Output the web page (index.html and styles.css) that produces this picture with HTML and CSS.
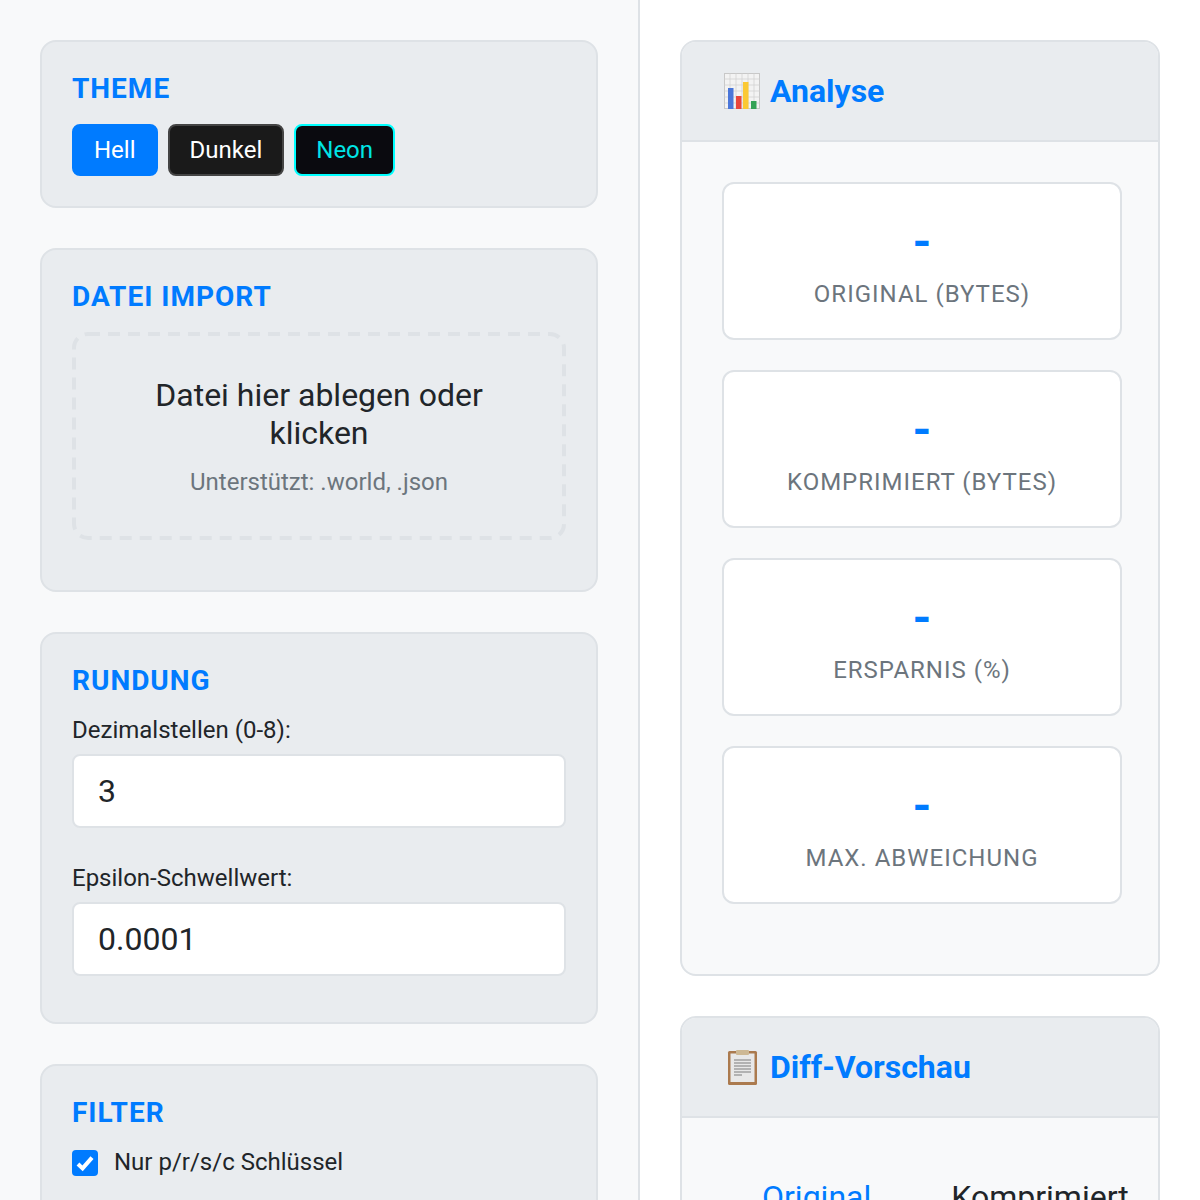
FILE: index.html
```html
<!DOCTYPE html>
<html lang="de">
<head>
  <meta charset="UTF-8">
  <title>Welt Komprimierung</title>
  <link rel="stylesheet" href="styles.css">
</head>
<body>
  <div class="app">
    <aside class="sidebar">
      <section class="panel">
        <h3>Theme</h3>
        <div class="themes">
          <button class="theme-btn light">Hell</button>
          <button class="theme-btn dark">Dunkel</button>
          <button class="theme-btn neon">Neon</button>
        </div>
      </section>

      <section class="panel">
        <h3>Datei Import</h3>
        <div class="dropzone">
          <svg class="dash" aria-hidden="true"><rect class="dash-line"></rect></svg>
          <p class="drop-title">Datei hier ablegen oder klicken</p>
          <p class="drop-hint">Unterstützt: .world, .json</p>
        </div>
      </section>

      <section class="panel">
        <h3>Rundung</h3>
        <div class="field">
          <label for="decimals">Dezimalstellen (0-8):</label>
          <input id="decimals" type="text" value="3">
        </div>
        <div class="field">
          <label for="epsilon">Epsilon-Schwellwert:</label>
          <input id="epsilon" type="text" value="0.0001">
        </div>
      </section>

      <section class="panel">
        <h3>Filter</h3>
        <label class="check">
          <span class="box">
            <svg viewBox="0 0 26 26" width="26" height="26"><path d="M6 14l4.6 4.4L20 7.6" fill="none" stroke="#fff" stroke-width="4"/></svg>
          </span>
          Nur p/r/s/c Schlüssel
        </label>
        <label class="check">
          <span class="box off"></span>
          Leere (Objekte/Arrays)
        </label>
      </section>
    </aside>

    <main class="content">
      <section class="card">
        <header class="card-head">
          <svg class="emoji" viewBox="0 0 36 36" width="36" height="36">
            <rect x="0.5" y="0.5" width="35" height="35" fill="#f3f3f3" stroke="#c8c8c8"/>
            <path d="M0 6h36M0 12h36M0 18h36M0 24h36M0 30h36M6 0v36M12 0v36M18 0v36M24 0v36M30 0v36" stroke="#cfcfcf" stroke-width="0.7"/>
            <rect x="4" y="15" width="5.5" height="21" fill="#4a76d9"/>
            <rect x="12" y="23" width="5.5" height="13" fill="#e8453c"/>
            <rect x="19" y="9" width="5.5" height="27" fill="#fbc934"/>
            <rect x="27" y="28" width="5.5" height="8" fill="#34a256"/>
          </svg>
          <h2>Analyse</h2>
        </header>
        <div class="card-body">
          <div class="stat"><div class="stat-value">-</div><div class="stat-label">Original (Bytes)</div></div>
          <div class="stat"><div class="stat-value">-</div><div class="stat-label">Komprimiert (Bytes)</div></div>
          <div class="stat"><div class="stat-value">-</div><div class="stat-label">Ersparnis (%)</div></div>
          <div class="stat"><div class="stat-value">-</div><div class="stat-label">Max. Abweichung</div></div>
        </div>
      </section>

      <section class="card">
        <header class="card-head">
          <svg class="emoji" viewBox="0 0 36 36" width="36" height="36">
            <rect x="4" y="2" width="29" height="34" rx="1.5" fill="#ab7a4e"/>
            <rect x="6.5" y="4.5" width="24" height="28.5" fill="#e8e8e8"/>
            <rect x="12" y="1" width="13" height="5" rx="1" fill="#cdb894"/>
            <path d="M10 11h17M10 14h17M10 17h17M10 20h17M10 23h17M10 26h8" stroke="#7d7d7d" stroke-width="1.2"/>
          </svg>
          <h2>Diff-Vorschau</h2>
        </header>
        <div class="card-body tabs-body">
          <div class="tabs">
            <span class="tab active">Original</span>
            <span class="tab">Komprimiert</span>
          </div>
        </div>
      </section>
    </main>
  </div>
</body>
</html>
```

FILE: styles.css
```css
* { box-sizing: border-box; }
html, body { margin: 0; height: 1200px; overflow: hidden; }
body { background: #fff; color: #212529; font-family: Roboto, "Liberation Sans", sans-serif; }

.app { display: flex; align-items: flex-start; height: 1200px; overflow: hidden; }

.sidebar { width: 640px; height: 1200px; flex: none; padding: 40px; background: #f8f9fa; border-right: 2px solid #dee2e6; overflow: hidden; }
.panel { background: #e9ecef; border: 2px solid #dee2e6; border-radius: 16px; padding: 30px; margin-bottom: 40px; }
.panel h3 { margin: 0 0 19px; color: #007bff; font-size: 28px; line-height: 33px; font-weight: 700; text-transform: uppercase; letter-spacing: 1px; }

.themes { display: flex; gap: 10px; }
.theme-btn { height: 52px; padding: 0 20px; border: 2px solid transparent; border-radius: 8px; font: 400 24px Roboto, sans-serif; }
.theme-btn.light { background: #007bff; border-color: #007bff; color: #fff; }
.theme-btn.dark { background: #1a1a1a; border-color: #444; color: #fff; }
.theme-btn.neon { background: #0a0a0f; border-color: #00ffff; color: #00e5e5; }

.dropzone { position: relative; padding: 44px; margin-bottom: 20px; text-align: center; }
.dash { position: absolute; top: 0; left: 0; width: 100%; height: 100%; }
.dash-line { x: 2px; y: 2px; width: calc(100% - 4px); height: calc(100% - 4px); rx: 14px; fill: none; stroke: #dee2e6; stroke-width: 4; stroke-dasharray: 12 8; }
.drop-title { margin: 0 0 16px; font-size: 32px; line-height: 38px; }
.drop-hint { margin: 0; font-size: 24px; line-height: 28px; color: #6c757d; }

.field { display: flow-root; }
.field + .field { margin-top: 20px; }
.field label { display: block; margin-bottom: 10px; font-size: 24px; line-height: 28px; }
.field input { display: block; width: 100%; height: 74px; margin-bottom: 16px; padding: 0 24px; background: #fff; border: 2px solid #dee2e6; border-radius: 8px; color: #212529; font: 400 32px Roboto, sans-serif; }

.check { display: flex; align-items: center; gap: 16px; margin-bottom: 22px; font-size: 24px; line-height: 28px; }
.box { width: 26px; height: 26px; flex: none; margin-top: 2px; background: #007bff; border-radius: 4px; }
.box svg { display: block; }
.box.off { background: #fff; border: 2px solid #767676; }

.content { flex: 1; min-width: 0; padding: 40px; }
.card { background: #f8f9fa; border: 2px solid #dee2e6; border-radius: 16px; margin-bottom: 40px; overflow: hidden; }
.card-head { display: flex; align-items: center; gap: 10px; height: 100px; padding: 0 40px; background: #e9ecef; border-bottom: 2px solid #dee2e6; }
.card-head h2 { margin: 0; color: #007bff; font-size: 32px; line-height: 38px; font-weight: 700; }
.emoji { flex: none; margin-left: 2px; }
.card-body { padding: 40px; }

.stat { width: 400px; height: 158px; margin-bottom: 30px; padding-top: 30px; background: #fff; border: 2px solid #dee2e6; border-radius: 12px; text-align: center; }
.stat-value { color: #007bff; font-size: 48px; line-height: 56px; font-weight: 700; }
.stat-label { margin-top: 10px; color: #6c757d; font-size: 24px; line-height: 28px; text-transform: uppercase; letter-spacing: 1px; }

.tabs { display: flex; padding-top: 20px; }
.tab { flex: none; padding: 0 40px; font-size: 32px; line-height: 38px; color: #212529; }
.tab.active { color: #007bff; }
```
